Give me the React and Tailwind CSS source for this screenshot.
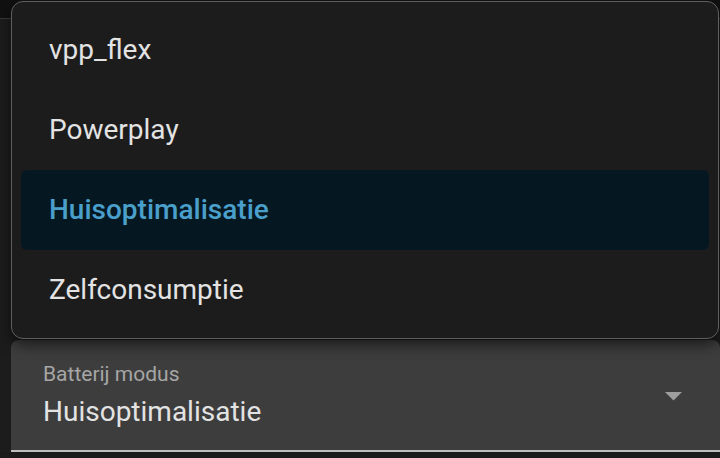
import React from 'react';

const options = ['vpp_flex', 'Powerplay', 'Huisoptimalisatie', 'Zelfconsumptie'];

export default function App() {
  const selected = 'Huisoptimalisatie';

  return (
    <div className="relative h-[458px] w-[720px] overflow-hidden bg-[#1c1c1c] font-['Roboto',sans-serif]">
      <div className="flex h-full flex-col">
        {/* Page header strip */}
        <div className="h-[19px] shrink-0 border-b border-[#3a3a3a] bg-[#111111]" />

        <div className="flex-1" />

        {/* Select field */}
        <div className="ml-[11px] flex h-[112px] shrink-0 items-center rounded-t-[8px] border-b-2 border-[#bdbdbd] bg-[#3d3d3d] pl-[32px] pr-[38px]">
          <div className="flex flex-1 flex-col self-start pt-[22px]">
            <span className="text-[21px] leading-[24px] text-[#a6a6a6]">Batterij modus</span>
            <span className="mt-[10px] text-[28px] leading-[32px] text-[#e3e3e3]">{selected}</span>
          </div>
          <svg width="17" height="9" viewBox="0 0 17 9" className="mt-[2px]">
            <path d="M0 0 L17 0 L8.5 8.5 Z" fill="#9e9e9e" />
          </svg>
        </div>

        <div className="h-[6px] shrink-0 bg-[#1a1a1a]" />
      </div>

      {/* Open dropdown menu */}
      <div className="absolute left-[11px] top-[1px] h-[338px] w-[708px] rounded-[12px] border border-[#5f5f5f] bg-[#1c1c1c] px-[9px] py-[8px] shadow-[0_6px_14px_rgba(0,0,0,0.55)]">
        {options.map((opt) => (
          <div
            key={opt}
            className={
              opt === selected
                ? 'flex h-[80px] items-center rounded-[6px] bg-[#051821] pl-[28px] text-[28px] font-medium text-[#4a9fcb]'
                : 'flex h-[80px] items-center pl-[28px] text-[28px] text-[#e3e3e3]'
            }
          >
            {opt}
          </div>
        ))}
      </div>
    </div>
  );
}
